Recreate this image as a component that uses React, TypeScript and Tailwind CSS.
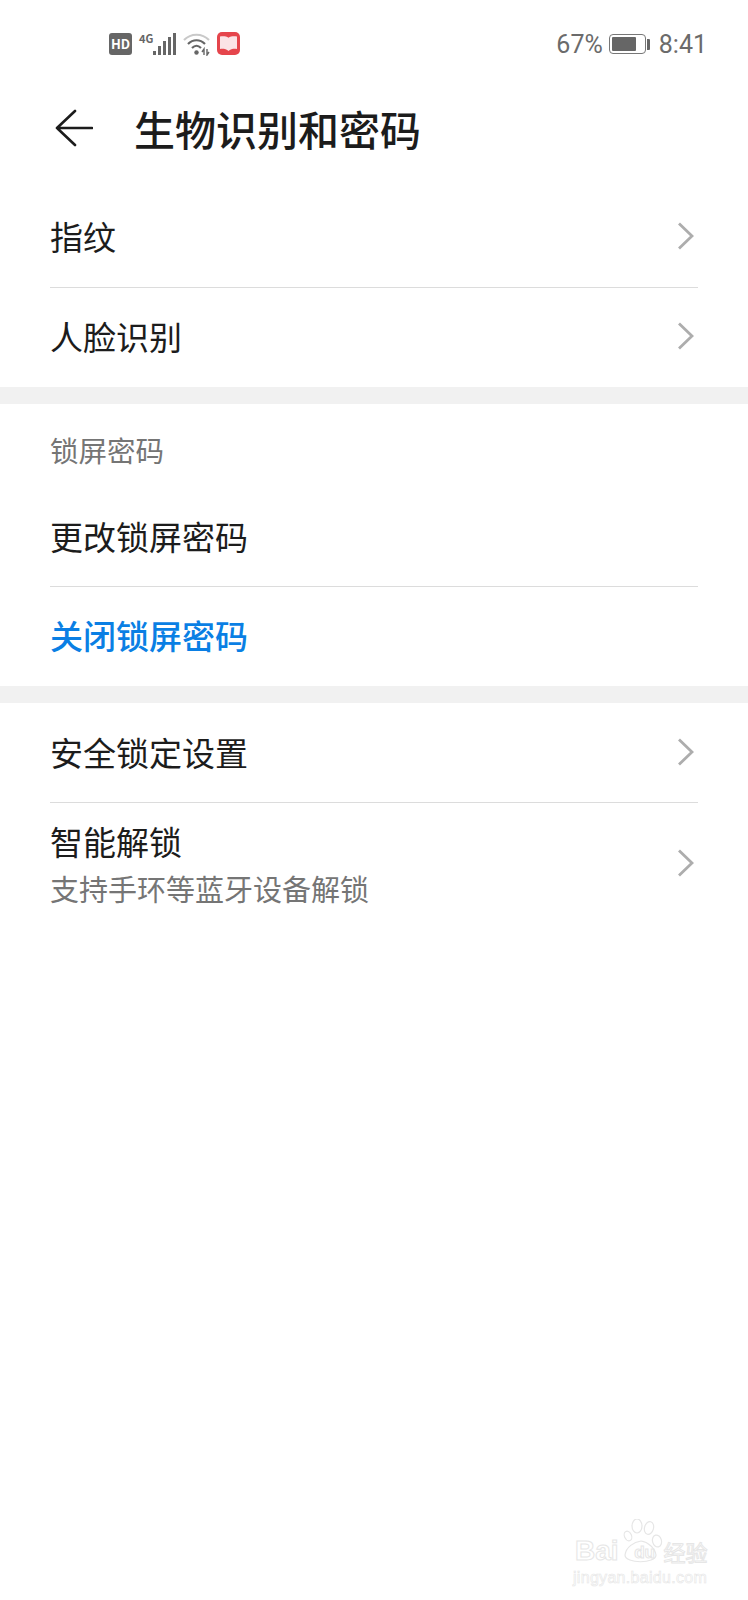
const font = "font-['Noto_Sans_CJK_SC','Noto_Sans',sans-serif]"

function Signal() {
  return (
    <svg width="24" height="24" viewBox="0 0 24 24" className="text-[#666666]" fill="currentColor">
      <rect x="1" y="19" width="3" height="4" />
      <rect x="6" y="14" width="3" height="9" />
      <rect x="11" y="9" width="3" height="14" />
      <rect x="16" y="5" width="3" height="18" />
      <rect x="21" y="1" width="3" height="22" />
    </svg>
  )
}

function Wifi() {
  return (
    <svg width="28" height="24" viewBox="0 0 28 24" fill="none">
      <path d="M1 8 C8 1 19 1 26 8" stroke="#c9c9c9" strokeWidth="2.2" />
      <path d="M5 12 C10 7 17 7 22 12" stroke="#666666" strokeWidth="2.2" />
      <path d="M9 16 C12 13 15 13 18 16" stroke="#666666" strokeWidth="2.2" />
      <circle cx="13.5" cy="20.5" r="2.2" fill="#666666" />
      <path d="M19 20 L21 17 V23 M24 17 V23 L26 20" stroke="#666666" strokeWidth="1.4" />
    </svg>
  )
}

function Book() {
  return (
    <div className="flex h-[23px] w-[23px] items-center justify-center rounded-[5px] bg-[#e5454c]">
      <svg width="17" height="15" viewBox="0 0 17 15" fill="#fbe3e6">
        <path d="M0 0.5 C3 0 6.5 0.2 8.5 1.8 C10.5 0.2 14 0 17 0.5 V13 C14 12.6 10.5 13 8.5 15 C6.5 13 3 12.6 0 13 Z" />
      </svg>
    </div>
  )
}

function Battery() {
  return (
    <div className="flex items-center gap-[1px]">
      <div className="flex h-[20px] w-[37px] items-center rounded-[4px] border border-[#777777] p-[2px]">
        <div className="h-full w-[24px] rounded-[1px] bg-[#666666]" />
      </div>
      <div className="h-[11px] w-[3px] rounded-r-[1px] bg-[#666666]" />
    </div>
  )
}

function StatusBar() {
  return (
    <div className="flex h-[86px] items-center justify-between pl-[109px] pr-[41px] pt-[1px]">
      <div className="flex items-center">
        <div className="flex h-[22px] w-[23px] items-center justify-center rounded-[3px] bg-[#666666] text-[13px] font-bold leading-none text-white">
          HD
        </div>
        <div className="ml-[7px] mb-[10px] text-[11px] font-bold leading-none text-[#666666]">4G</div>
        <div className="ml-[-1px]">
          <Signal />
        </div>
        <div className="ml-[7px]">
          <Wifi />
        </div>
        <div className="ml-[6px]">
          <Book />
        </div>
      </div>
      <div className="flex items-center pt-[1px] text-[25px] leading-none text-[#6b6b6b]">
        <span className="font-['Roboto',sans-serif]">67%</span>
        <div className="ml-[6px]">
          <Battery />
        </div>
        <span className="ml-[9px] font-['Roboto',sans-serif]">8:41</span>
      </div>
    </div>
  )
}

function Chevron() {
  return (
    <svg width="17" height="28" viewBox="0 0 17 28" fill="none" stroke="#adadad" strokeWidth="2.8">
      <path d="M2 1.5 L15 14 L2 26.5" />
    </svg>
  )
}

function Row({ label, sub, blue, arrow, divider, className }: { label: string; sub?: string; blue?: boolean; arrow?: boolean; divider?: boolean; className: string }) {
  return (
    <div className={`flex items-center justify-between pr-[4px] ${divider ? "border-b border-[#dcdcdc]" : ""} ${className}`}>
      <div>
        <div className={`text-[33px] leading-[44px] ${blue ? "font-medium text-[#0a7fe4]" : "text-[#1c1c1c]"}`}>{label}</div>
        {sub && <div className="mt-[6px] text-[29px] leading-[38px] text-[#757575]">{sub}</div>}
      </div>
      {arrow && <Chevron />}
    </div>
  )
}

function Watermark() {
  const outline = "text-transparent [-webkit-text-stroke:1px_#e6e6e6]"
  return (
    <div className="absolute left-[573px] top-[1519px] w-[136px] select-none font-['Liberation_Sans',sans-serif]">
      <svg width="40" height="44" viewBox="0 0 40 44" fill="none" stroke="#e6e6e6" strokeWidth="1.2" className="absolute left-[50px] top-0">
        <ellipse cx="5" cy="17" rx="3.5" ry="5" transform="rotate(-25 5 17)" />
        <ellipse cx="14" cy="7" rx="5" ry="7" />
        <ellipse cx="26" cy="9" rx="4.5" ry="6.5" transform="rotate(15 26 9)" />
        <ellipse cx="34" cy="22" rx="4.5" ry="6" transform="rotate(-15 34 22)" />
        <path d="M2 36 C3 28 11 23 18 22 C25 23 32 29 33 36 C33 45 2 45 2 36 Z" />
      </svg>
      <div className="flex h-[26px] mt-[19px] items-end pl-[2px]">
        <span className={`text-[28px] font-bold leading-[26px] ${outline}`}>Bai</span>
        <span className={`ml-[11px] mb-[1px] w-[30px] text-center text-[17px] font-bold leading-[20px] ${outline}`}>du</span>
        <span className={`ml-[4px] text-[22px] leading-[26px] ${outline} ${font}`}>经验</span>
      </div>
      <div className="mt-[4px] whitespace-nowrap text-[16px] leading-[20px] tracking-[0.3px] text-transparent [-webkit-text-stroke:0.6px_#e6e6e6]">jingyan.baidu.com</div>
    </div>
  )
}

export default function App() {
  return (
    <div className={`relative h-[1600px] w-[748px] overflow-hidden bg-white ${font}`}>
      <StatusBar />

      <div className="flex h-[104px] items-start pl-[55px]">
        <svg width="38" height="38" viewBox="0 0 38 38" fill="none" stroke="#1c1c1c" strokeWidth="2.6" strokeLinecap="round" strokeLinejoin="round" className="mt-[23px]">
          <path d="M20 2 L2 19 L20 36 M2 19 H37" />
        </svg>
        <div className="ml-[41px] mt-[16px] text-[41px] font-medium leading-[52px] text-[#1c1c1c]">生物识别和密码</div>
      </div>

      <div className="ml-[50px] mr-[50px]">
        <Row label="指纹" arrow divider className="h-[98px] pb-[5px]" />
        <Row label="人脸识别" arrow className="h-[99px] pb-[4px]" />
      </div>

      <div className="h-[17px] bg-[#f1f1f1]" />

      <div className="ml-[50px] mr-[50px]">
        <div className="flex h-[85px] items-center pt-[7px] text-[28.5px] leading-[38px] text-[#757575]">锁屏密码</div>
        <Row label="更改锁屏密码" divider className="h-[98px] pb-[4px]" />
        <Row label="关闭锁屏密码" blue className="h-[99px] pb-[4px]" />
      </div>

      <div className="h-[17px] bg-[#f1f1f1]" />

      <div className="ml-[50px] mr-[50px]">
        <Row label="安全锁定设置" arrow divider className="h-[100px] pb-[2px]" />
        <Row label="智能解锁" sub="支持手环等蓝牙设备解锁" arrow className="h-[122px] pb-[2px]" />
      </div>

      <Watermark />
    </div>
  )
}
